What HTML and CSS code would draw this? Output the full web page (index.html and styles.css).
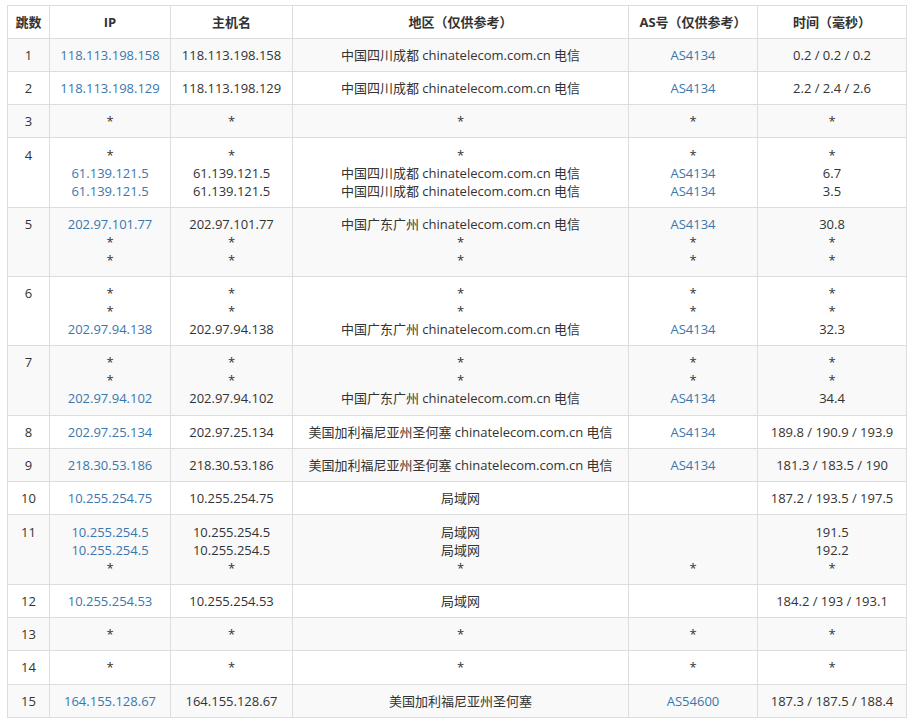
FILE: index.html
```html
<!DOCTYPE html>
<html lang="zh-CN">
<head>
<meta charset="utf-8">
<title>Traceroute</title>
<link rel="stylesheet" href="styles.css">
</head>
<body>
<div class="wrap">
<table class="trace">
<colgroup>
<col class="c-hop"><col class="c-ip"><col class="c-host"><col class="c-loc"><col class="c-as"><col class="c-time">
</colgroup>
<thead>
<tr><th>跳数</th><th>IP</th><th>主机名</th><th>地区（仅供参考）</th><th>AS号（仅供参考）</th><th>时间（毫秒）</th></tr>
</thead>
<tbody>
<tr><td>1</td><td><a>118.113.198.158</a></td><td>118.113.198.158</td><td>中国四川成都 chinatelecom.com.cn 电信</td><td><a>AS4134</a></td><td>0.2 / 0.2 / 0.2</td></tr>
<tr><td>2</td><td><a>118.113.198.129</a></td><td>118.113.198.129</td><td>中国四川成都 chinatelecom.com.cn 电信</td><td><a>AS4134</a></td><td>2.2 / 2.4 / 2.6</td></tr>
<tr><td>3</td><td>*</td><td>*</td><td>*</td><td>*</td><td>*</td></tr>
<tr><td>4</td><td>*<br><a>61.139.121.5</a><br><a>61.139.121.5</a></td><td>*<br>61.139.121.5<br>61.139.121.5</td><td>*<br>中国四川成都 chinatelecom.com.cn 电信<br>中国四川成都 chinatelecom.com.cn 电信</td><td>*<br><a>AS4134</a><br><a>AS4134</a></td><td>*<br>6.7<br>3.5</td></tr>
<tr><td>5</td><td><a>202.97.101.77</a><br>*<br>*</td><td>202.97.101.77<br>*<br>*</td><td>中国广东广州 chinatelecom.com.cn 电信<br>*<br>*</td><td><a>AS4134</a><br>*<br>*</td><td>30.8<br>*<br>*</td></tr>
<tr><td>6</td><td>*<br>*<br><a>202.97.94.138</a></td><td>*<br>*<br>202.97.94.138</td><td>*<br>*<br>中国广东广州 chinatelecom.com.cn 电信</td><td>*<br>*<br><a>AS4134</a></td><td>*<br>*<br>32.3</td></tr>
<tr><td>7</td><td>*<br>*<br><a>202.97.94.102</a></td><td>*<br>*<br>202.97.94.102</td><td>*<br>*<br>中国广东广州 chinatelecom.com.cn 电信</td><td>*<br>*<br><a>AS4134</a></td><td>*<br>*<br>34.4</td></tr>
<tr><td>8</td><td><a>202.97.25.134</a></td><td>202.97.25.134</td><td>美国加利福尼亚州圣何塞 chinatelecom.com.cn 电信</td><td><a>AS4134</a></td><td>189.8 / 190.9 / 193.9</td></tr>
<tr><td>9</td><td><a>218.30.53.186</a></td><td>218.30.53.186</td><td>美国加利福尼亚州圣何塞 chinatelecom.com.cn 电信</td><td><a>AS4134</a></td><td>181.3 / 183.5 / 190</td></tr>
<tr><td>10</td><td><a>10.255.254.75</a></td><td>10.255.254.75</td><td>局域网</td><td></td><td>187.2 / 193.5 / 197.5</td></tr>
<tr><td>11</td><td><a>10.255.254.5</a><br><a>10.255.254.5</a><br>*</td><td>10.255.254.5<br>10.255.254.5<br>*</td><td>局域网<br>局域网<br>*</td><td><br><br>*</td><td>191.5<br>192.2<br>*</td></tr>
<tr><td>12</td><td><a>10.255.254.53</a></td><td>10.255.254.53</td><td>局域网</td><td></td><td>184.2 / 193 / 193.1</td></tr>
<tr><td>13</td><td>*</td><td>*</td><td>*</td><td>*</td><td>*</td></tr>
<tr><td>14</td><td>*</td><td>*</td><td>*</td><td>*</td><td>*</td></tr>
<tr><td>15</td><td><a>164.155.128.67</a></td><td>164.155.128.67</td><td>美国加利福尼亚州圣何塞</td><td><a>AS54600</a></td><td>187.3 / 187.5 / 188.4</td></tr>
</tbody>
</table>
</div>
</body>
</html>
```
FILE: styles.css
```css
html, body {
  margin: 0;
  padding: 0;
  background: #fff;
}
.wrap {
  padding: 5px 0 0 7px;
}
.trace {
  border-collapse: collapse;
  table-layout: fixed;
  width: 899px;
  font-family: "Open Sans", "Noto Sans CJK SC", sans-serif;
  font-size: 13px;
  line-height: 18px;
  color: #333;
}
.c-hop { width: 42px; }
.c-ip { width: 121px; }
.c-host { width: 122px; }
.c-loc { width: 336px; }
.c-as { width: 129px; }
.c-time { width: 149px; }
.trace th,
.trace td {
  border: 1px solid #ddd;
  padding: 7.15px 4px;
  text-align: center;
  vertical-align: top;
  white-space: nowrap;
}
.trace th {
  font-weight: bold;
  padding-top: 6.5px;
}
.trace tbody tr:nth-child(odd) td {
  background: #f9f9f9;
}
.trace a {
  color: #3a77ad;
  text-decoration: none;
}
```
